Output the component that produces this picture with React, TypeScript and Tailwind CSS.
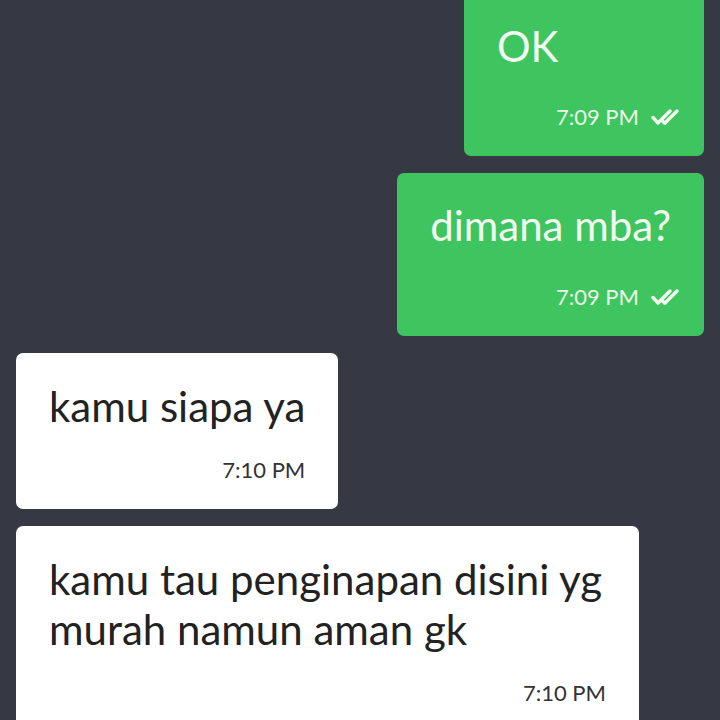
const DoubleCheck = () => (
    <svg width="34" height="18" viewBox="0 0 34 18" fill="none" className="ml-[12px] -mr-[14px]">
        <path d="M2 9.5 L7 15 L19 3" stroke="#f1fbef" strokeWidth="3.4" strokeLinecap="round" strokeLinejoin="round" />
        <path d="M14 15 L26 3" stroke="#f1fbef" strokeWidth="3.4" strokeLinecap="round" />
        <path d="M11 12.5 L13.5 15" stroke="#f1fbef" strokeWidth="3.4" strokeLinecap="round" />
    </svg>
);

const Sent = ({ text, time, first }: { text: string, time: string, first?: boolean }) => (
    <div className="flex justify-end">
        <div className={`bg-[#3ec55f] rounded-[7px] px-[33px] pb-[24px] ${first ? "pt-[21px] rounded-t-none min-w-[240px]" : "pt-[27px]"}`}>
            <p className="text-[42px] leading-[50px] text-[#f1fbef]">{text}</p>
            <div className={`flex items-center justify-end h-[30px] ${first ? "mt-[31px]" : "mt-[32px]"}`}>
                <span className="text-[22px] leading-[30px] text-[#eaf7e6]">{time}</span>
                <DoubleCheck />
            </div>
        </div>
    </div>
);

const Received = ({ text, time, wide }: { text: React.ReactNode, time: string, wide?: boolean }) => (
    <div className="flex justify-start">
        <div className={`bg-white rounded-[7px] px-[33px] pt-[28px] pb-[24px] ${wide ? "w-[623px]" : ""}`}>
            <p className="text-[42px] leading-[50px] text-[#222222]">{text}</p>
            <p className="text-[22px] leading-[30px] text-[#333333] text-right mt-[24px]">{time}</p>
        </div>
    </div>
);

export default function App() {
    return (
        <div className="w-[720px] h-[720px] overflow-hidden bg-[#363944] px-[16px] flex flex-col gap-[17px]" style={{ fontFamily: "Lato, 'Open Sans', sans-serif" }}>
            <Sent text="OK" time="7:09 PM" first />
            <Sent text="dimana mba?" time="7:09 PM" />
            <Received text="kamu siapa ya" time="7:10 PM" />
            <Received text={<>kamu tau penginapan disini yg<br />murah namun aman gk</>} time="7:10 PM" wide />
        </div>
    );
}
